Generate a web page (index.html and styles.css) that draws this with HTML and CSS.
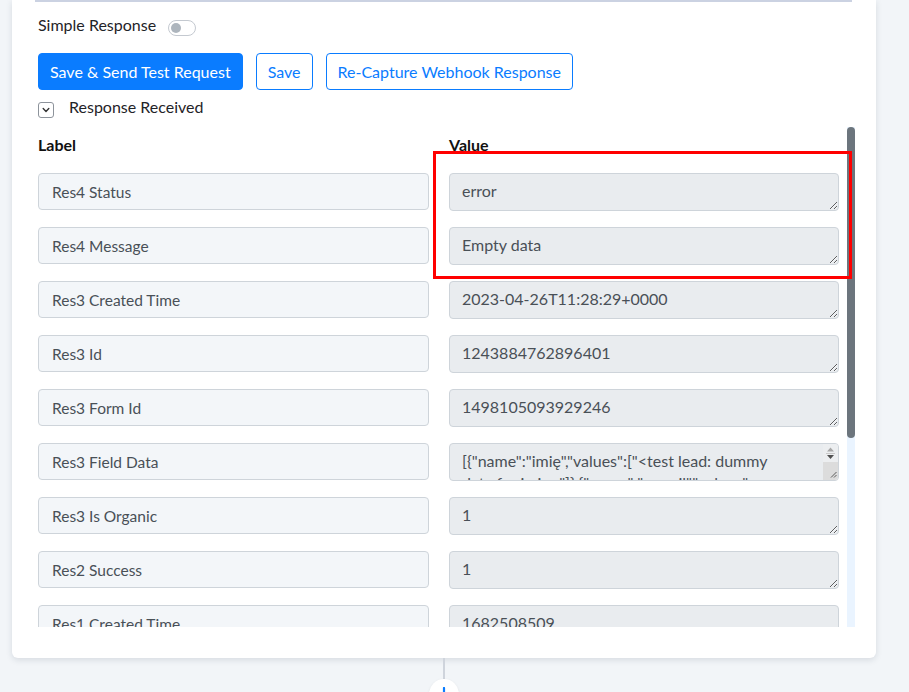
FILE: index.html
```html
<!DOCTYPE html>
<html>
<head>
<meta charset="utf-8">
<link rel="stylesheet" href="styles.css">
</head>
<body>
<div class="card">
  <div class="divider"></div>
  <div class="simple-row">
    <span class="row-text">Simple Response</span>
    <span class="toggle"><span class="knob"></span></span>
  </div>
  <div class="btn-row">
    <button class="btn btn-primary">Save &amp; Send Test Request</button>
    <button class="btn btn-outline">Save</button>
    <button class="btn btn-outline">Re-Capture Webhook Response</button>
  </div>
  <div class="received-row">
    <span class="chev-box"><svg width="10" height="10" viewBox="0 0 10 10"><path d="M2.2 3.6 L5 6.4 L7.8 3.6" fill="none" stroke="#333" stroke-width="1.4" stroke-linecap="round" stroke-linejoin="round"/></svg></span>
    <span class="row-text">Response Received</span>
  </div>
  <div class="scroll-area">
    <div class="viewport">
      <div class="grid">
        <div class="head">Label</div><div class="head">Value</div>
        <input class="lbl" readonly value="Res4 Status"><textarea class="val" readonly>error</textarea>
        <input class="lbl" readonly value="Res4 Message"><textarea class="val" readonly>Empty data</textarea>
        <input class="lbl" readonly value="Res3 Created Time"><textarea class="val" readonly>2023-04-26T11:28:29+0000</textarea>
        <input class="lbl" readonly value="Res3 Id"><textarea class="val" readonly>1243884762896401</textarea>
        <input class="lbl" readonly value="Res3 Form Id"><textarea class="val" readonly>1498105093929246</textarea>
        <input class="lbl" readonly value="Res3 Field Data">
        <div class="val-wrap">
          <textarea class="val val-long" readonly>[{"name":"imię","values":["&lt;test lead: dummy data for imię&gt;"]},{"name":"e-mail","values":["test@fb.com"]}]</textarea>
          <svg class="mini-sb" width="15" height="36" viewBox="0 0 15 36">
            <rect x="0" y="0" width="15" height="36" fill="#eceef0"/>
            <path d="M4 7.5 H11 L7.5 3.5 Z" fill="#a8a8a8"/>
            <path d="M3 9.5 H12" stroke="#c8c8c8" stroke-width="1"/>
            <path d="M4 11 H11 L7.5 15 Z" fill="#505050"/>
            <rect x="0" y="18" width="15" height="18" fill="#dcdcdc"/>
            <path d="M13.5 28 L8 33.5 M13.5 31 L11 33.5" stroke="#5a5a5a" stroke-width="1"/>
          </svg>
        </div>
        <input class="lbl" readonly value="Res3 Is Organic"><textarea class="val" readonly>1</textarea>
        <input class="lbl" readonly value="Res2 Success"><textarea class="val" readonly>1</textarea>
        <input class="lbl" readonly value="Res1 Created Time"><textarea class="val" readonly>1682508509</textarea>
        <input class="lbl" readonly value="Res1 Id"><textarea class="val" readonly>1243884762896401</textarea>
        <input class="lbl" readonly value="Res1 Status"><textarea class="val" readonly>success</textarea>
        <input class="lbl" readonly value="Res0 Success"><textarea class="val" readonly>1</textarea>
      </div>
    </div>
    <div class="track"><div class="thumb"></div></div>
  </div>
</div>
<div class="connector">
  <div class="vline"></div>
  <div class="add-circle"><svg width="14" height="14" viewBox="0 0 14 14"><path d="M7 1 V13 M1 7 H13" stroke="#0a7cff" stroke-width="2.2" stroke-linecap="round"/></svg></div>
</div>
<div class="highlight"></div>
</body>
</html>
```
FILE: styles.css
```css
html, body {
  margin: 0;
  padding: 0;
}
body {
  background: #f2f5f8;
  font-family: Lato, "Liberation Sans", sans-serif;
  font-size: 16px;
  color: #1f2328;
  height: 692px;
  overflow: hidden;
  position: relative;
}
.card {
  margin-left: 12px;
  width: 864px;
  box-sizing: border-box;
  background: #fff;
  border-radius: 0 0 6px 6px;
  box-shadow: 0 2px 6px rgba(30, 45, 70, 0.13);
  padding: 0 21px 31px 26px;
}
.divider {
  height: 2px;
  background: #cbd2e2;
  margin-left: -3px;
  width: 817px;
}
.row-text {
  line-height: 20px;
}
.simple-row {
  margin-top: 13px;
  height: 20px;
  display: flex;
  align-items: flex-start;
  gap: 12px;
}
.toggle {
  margin-top: 5px;
  width: 28px;
  height: 16px;
  box-sizing: border-box;
  border: 1px solid #c4c9d0;
  border-radius: 8px;
  display: flex;
  align-items: center;
  padding-left: 2px;
}
.knob {
  width: 10px;
  height: 10px;
  border-radius: 50%;
  background: #adb5bd;
}
.btn-row {
  margin-top: 18px;
  display: flex;
  gap: 13px;
}
.btn {
  height: 37px;
  padding: 0 11px 1px;
  font-family: inherit;
  font-size: 16px;
  border-radius: 4px;
  border: 1px solid #0a7cff;
  cursor: pointer;
}
.btn-primary {
  background: #0a7cff;
  color: #fff;
}
.btn-outline {
  background: #fff;
  color: #0a7cff;
}
.received-row {
  margin-top: 7px;
  height: 20px;
  display: flex;
  align-items: flex-start;
  gap: 15px;
}
.chev-box {
  margin-top: 5px;
  width: 16px;
  height: 16px;
  box-sizing: border-box;
  border: 1px solid #8d939b;
  border-radius: 3px;
  display: flex;
  align-items: center;
  justify-content: center;
}
.scroll-area {
  margin-top: 10px;
  height: 500px;
  display: flex;
}
.viewport {
  flex: 1;
  overflow: hidden;
  padding-right: 8px;
}
.grid {
  display: grid;
  grid-template-columns: 391px 390px;
  column-gap: 20px;
  row-gap: 16px;
  align-items: start;
}
.head {
  font-weight: 700;
  color: #111;
  line-height: 20px;
  padding-top: 8px;
  margin-bottom: 2px;
}
.lbl {
  box-sizing: border-box;
  height: 37px;
  width: 100%;
  margin: 0;
  padding: 0 13px;
  border: 1px solid #ced4da;
  border-radius: 4px;
  background: #f3f6f9;
  color: #495057;
  font-family: inherit;
  font-size: 15.5px;
  outline: none;
}
.val {
  box-sizing: border-box;
  display: block;
  height: 38px;
  width: 100%;
  margin: 0;
  padding: 6px 12px 0;
  border: 1px solid #ced4da;
  border-radius: 4px;
  background: #e9ecef;
  color: #495057;
  font-family: inherit;
  font-size: 16px;
  line-height: 22px;
  resize: vertical;
  outline: none;
  overflow: hidden;
}
.val-wrap {
  position: relative;
}
.val-long {
  padding-right: 40px;
}
.mini-sb {
  position: absolute;
  right: 1px;
  top: 1px;
  border-radius: 0 3px 3px 0;
}
.track {
  width: 8px;
  background: #eaf4ff;
}
.thumb {
  height: 311px;
  background: #6c757d;
  border-radius: 4px;
}
.connector {
  margin-left: 12px;
  width: 864px;
  display: flex;
  flex-direction: column;
  align-items: center;
}
.vline {
  width: 2px;
  height: 21px;
  background: #cfd4dc;
}
.add-circle {
  width: 30px;
  height: 30px;
  border-radius: 50%;
  background: #fff;
  box-shadow: 0 1px 3px rgba(0, 0, 0, 0.08);
  display: flex;
  align-items: center;
  justify-content: center;
}
.highlight {
  position: absolute;
  left: 433px;
  top: 151px;
  width: 419px;
  height: 128px;
  box-sizing: border-box;
  border: 3px solid #f00;
}
```
